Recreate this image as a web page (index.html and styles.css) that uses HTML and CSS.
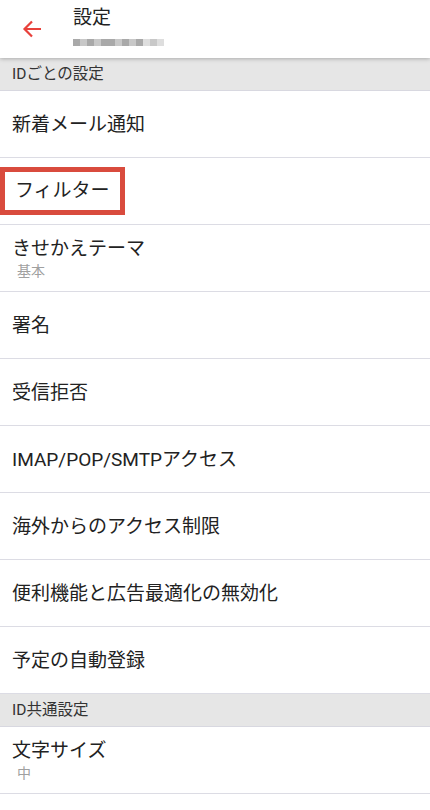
FILE: index.html
```html
<!DOCTYPE html>
<html lang="ja">
<head>
    <meta charset="UTF-8">
    <meta name="viewport" content="width=device-width, initial-scale=1.0">
    <title>設定</title>
    <link rel="stylesheet" href="styles.css">
</head>
<body>
    <header class="appbar">
        <svg class="back" width="24" height="24" viewBox="0 0 24 24">
            <path d="M20 12H4.5M11 4.5L3.5 12L11 19.5" fill="none" stroke="#e8413b" stroke-width="2.2"/>
        </svg>
        <div class="titles">
            <div class="title">設定</div>
            <div class="account">
                <span class="px d"></span><span class="px"></span><span class="px d"></span><span class="px"></span><span class="px d"></span><span class="px d"></span><span class="px"></span><span class="px d"></span><span class="px"></span><span class="px d"></span><span class="px l"></span><span class="px"></span><span class="px l"></span>
            </div>
        </div>
    </header>

    <div class="section">IDごとの設定</div>
    <div class="row"><span class="label">新着メール通知</span></div>
    <div class="row"><span class="label marked">フィルター</span></div>
    <div class="row"><span class="label">きせかえテーマ</span><span class="sub">基本</span></div>
    <div class="row"><span class="label">署名</span></div>
    <div class="row"><span class="label">受信拒否</span></div>
    <div class="row"><span class="label">IMAP/POP/SMTPアクセス</span></div>
    <div class="row"><span class="label">海外からのアクセス制限</span></div>
    <div class="row"><span class="label">便利機能と広告最適化の無効化</span></div>
    <div class="row"><span class="label">予定の自動登録</span></div>

    <div class="section">ID共通設定</div>
    <div class="row"><span class="label">文字サイズ</span><span class="sub">中</span></div>
    <div class="row"></div>
</body>
</html>
```

FILE: styles.css
```css
body { margin: 0; background: #fff; font-family: Roboto, "Noto Sans CJK JP", sans-serif; color: #222; overflow: hidden; }

.appbar { height: 58px; display: flex; align-items: flex-start; background: #fff; box-shadow: 0 1px 4px rgba(0,0,0,0.25); position: relative; z-index: 1; }
.back { margin: 17px 0 0 21px; }
.titles { margin-left: 28px; padding-top: 5px; }
.title { font-size: 19px; line-height: 26px; color: #222; }
.account { display: flex; margin-top: 8px; }
.px { width: 7px; height: 7px; background: #c8c8c8; filter: blur(0.5px); }
.px.d { background: #a9a9a9; }
.px.l { background: #dedede; }

.section { height: 32px; line-height: 32px; background: #e6e6e6; padding-left: 12px; font-size: 15.5px; color: #333; border-bottom: 1px solid #d8d8e0; }

.row { height: 66px; border-bottom: 1px solid #dcdce4; display: flex; flex-direction: column; justify-content: center; padding-left: 12px; }
.label { font-size: 19px; line-height: 25px; }
.sub { font-size: 14px; color: #a0a0a0; line-height: 20px; padding-left: 5px; }
.marked { align-self: flex-start; margin-left: -12px; padding: 6px 10px 7px 10px; border: 5px solid #d94b3d; }
```
